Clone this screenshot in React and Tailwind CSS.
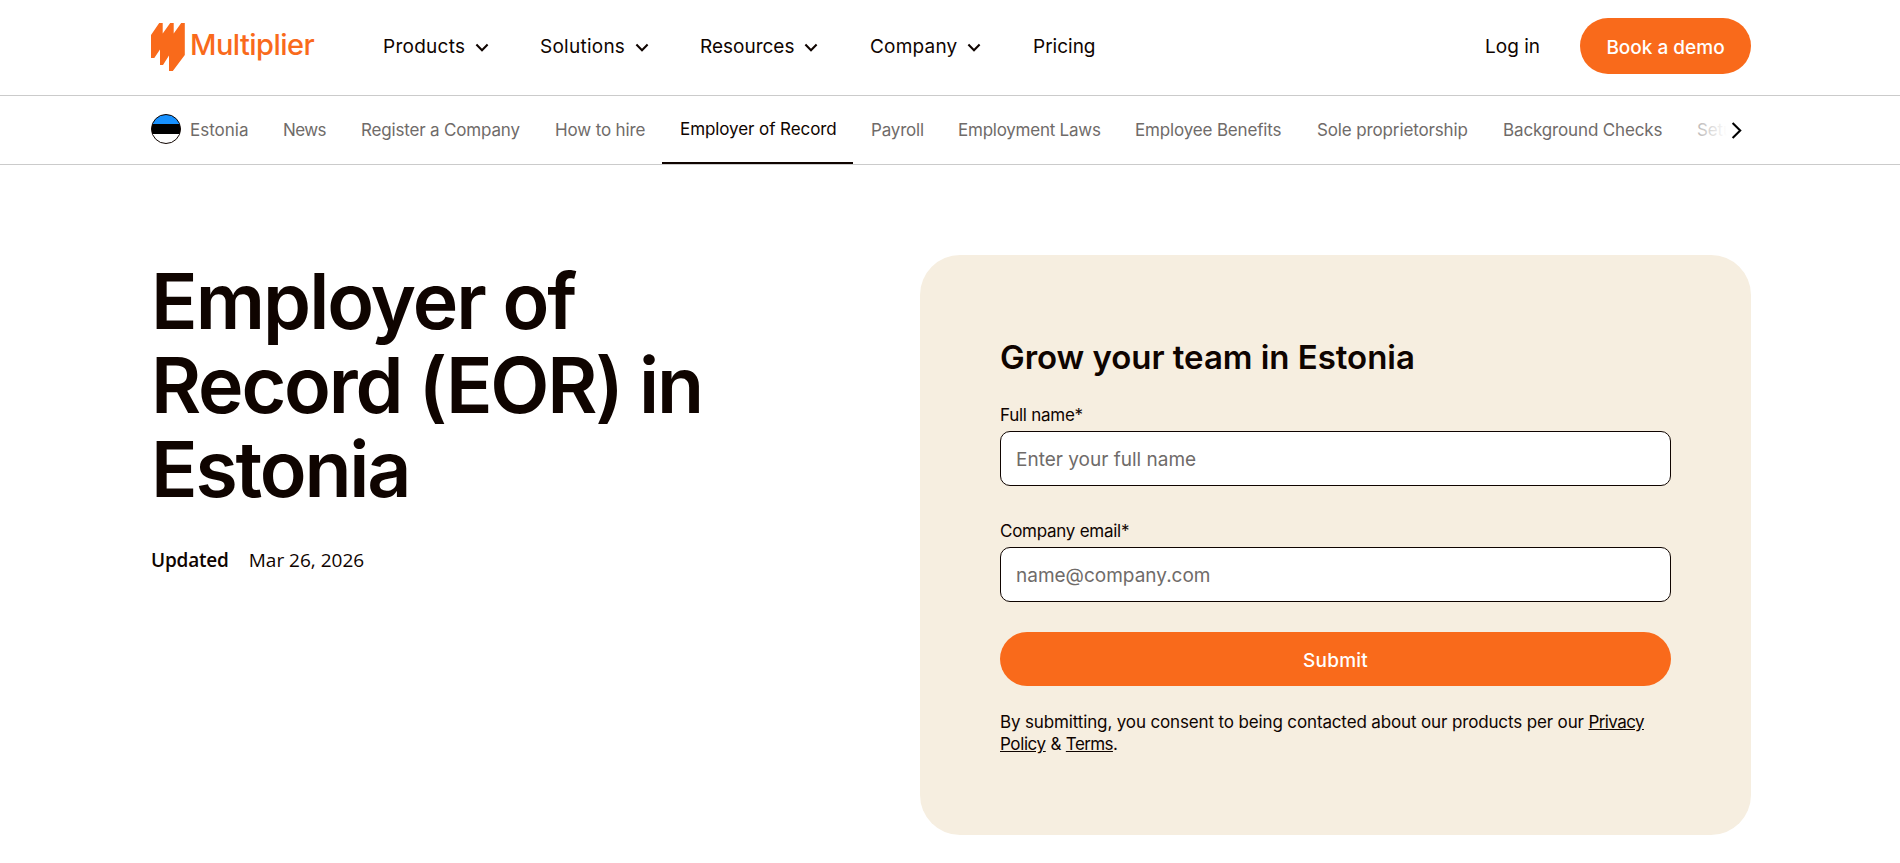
import React from 'react';
import clsx from 'clsx';

const mainNav = [
  { label: 'Products', menu: true, className: 'w-[157px] tracking-[0.27px]' },
  { label: 'Solutions', menu: true, className: 'w-[160px] tracking-[0.25px]' },
  { label: 'Resources', menu: true, className: 'w-[170px]' },
  { label: 'Company', menu: true, className: 'w-[163px] tracking-[0.2px]' },
  { label: 'Pricing', menu: false, className: '' },
];

const countryNav = [
  { label: 'News', className: 'w-[78px] tracking-[-0.6px]' },
  { label: 'Register a Company', className: 'w-[194px] tracking-[-0.17px]' },
  { label: 'How to hire', className: 'w-[124px] tracking-[-0.14px]' },
  { label: 'Employer of Record', active: true, className: 'w-[191px] pl-[18px] tracking-[-0.08px]' },
  { label: 'Payroll', className: 'w-[88px] pl-[18px] tracking-[-0.19px]' },
  { label: 'Employment Laws', className: 'w-[177px] tracking-[-0.24px]' },
  { label: 'Employee Benefits', className: 'w-[182px] tracking-[-0.16px]' },
  { label: 'Sole proprietorship', className: 'w-[186px] tracking-[-0.13px]' },
  { label: 'Background Checks', className: 'w-[194px] tracking-[-0.14px]' },
  { label: 'Setup', className: 'w-[78px] tracking-[-0.14px]' },
];

function Logo() {
  return (
    <a href="#" className="flex h-12 w-[232px] items-center pt-[2px] text-[#f96a1b]">
      <svg className="h-12 w-[34px] shrink-0" viewBox="0 0 34 48" fill="currentColor">
        <path d="M0 12L8.2 0H11.7V10.5L19.2 0H22.7V10.5L30.2 0H33.8V32L21.8 48H18V32.5L12 42H9V26.5L3.3 35H0Z" />
      </svg>
      <span className="-mt-[4px] ml-[5px] text-[29px] leading-8 font-medium tracking-[-0.55px]">Multiplier</span>
    </a>
  );
}

function ChevronDown() {
  return (
    <svg className="mt-px ml-[10px] h-[9px] w-[14px] shrink-0" viewBox="0 0 14 9" fill="none" stroke="currentColor" strokeWidth="2.1">
      <path d="M1.4 1.6L7 7.2L12.6 1.6" />
    </svg>
  );
}

function EstoniaFlag() {
  return (
    <svg className="-mt-0.5 h-[30px] w-[30px] shrink-0" viewBox="0 0 30 30">
      <clipPath id="flag">
        <circle cx="15" cy="15" r="14.5" />
      </clipPath>
      <g clipPath="url(#flag)">
        <rect width="30" height="10" fill="#1791ff" />
        <rect y="10" width="30" height="10" fill="#000" />
        <rect y="20" width="30" height="10" fill="#fff" />
      </g>
      <circle cx="15" cy="15" r="14.5" fill="none" stroke="#0f0400" />
    </svg>
  );
}

function Field({ label, type, placeholder }) {
  return (
    <label className="block">
      <span className="block text-[17px] leading-5 tracking-[-0.26px]">{label}</span>
      <input
        type={type}
        placeholder={placeholder}
        className="mt-1.5 block h-[55px] w-full rounded-[10px] border border-[#0f0400] bg-white pt-[2px] pr-[14px] pl-[15px] text-[19px] placeholder:text-[#6f6b69]"
      />
    </label>
  );
}

export default function App() {
  return (
    <div className="h-[863px] overflow-hidden bg-white font-['Inter','Liberation_Sans',sans-serif] text-[#0f0400]">
      <header className="h-24 border-b border-[#cbcbcb]">
        <div className="ml-[151px] flex h-[92px] w-[1600px] items-center text-[19px]">
          <Logo />
          <nav className="flex items-center pt-[2px]">
            {mainNav.map((item) => (
              <a key={item.label} href="#" className={clsx('flex items-center', item.className)}>
                {item.label}
                {item.menu && <ChevronDown />}
              </a>
            ))}
          </nav>
          <a href="#" className="ml-auto pt-[2px]">Log in</a>
          <a
            href="#"
            className="ml-[40px] flex h-14 w-[171px] items-center justify-center rounded-full bg-[#f96a1b] pt-[4px] font-medium text-white"
          >
            Book a demo
          </a>
        </div>
      </header>

      <div className="h-[69px] border-b border-[#cbcbcb]">
        <div className="relative ml-[151px] flex h-[68px] w-[1600px] text-[17px] text-[#6f6b69]">
          <a href="#" className="flex w-[115px] shrink-0 items-center">
            <EstoniaFlag />
            <span className="ml-[9px] pt-px">Estonia</span>
          </a>
          <nav className="flex flex-1 overflow-hidden">
            {countryNav.map((item) => (
              <a
                key={item.label}
                href="#"
                className={clsx(
                  'flex shrink-0 items-center pt-[2px] whitespace-nowrap',
                  item.active && 'border-b-2 border-[#0f0400] text-[#0f0400]',
                  !item.className.includes('pl-') && 'pl-[17px]',
                  item.className
                )}
              >
                {item.label}
              </a>
            ))}
          </nav>
          {/* fades the last link out behind the scroll button */}
          <div className="absolute top-0 right-0 flex h-full w-[88px]">
            <div className="w-[64px] bg-linear-to-r from-white/0 to-white" />
            <button type="button" className="flex flex-1 items-center bg-white text-black">
              <svg className="ml-[4px] h-[17px] w-[12px]" viewBox="0 0 12 17" fill="none" stroke="currentColor" strokeWidth="2.1">
                <path d="M1.6 1L9.2 8.5L1.6 16" />
              </svg>
            </button>
          </div>
        </div>
      </div>

      <main className="ml-[151px] flex w-[1600px] justify-between pt-[90px]">
        <section className="pt-[4px]">
          <h1 className="text-[77px] leading-[84px] font-semibold tracking-[-2.2px]">
            <span className="tracking-[-1.95px]">Employer of</span>
            <br />
            Record (EOR) in
            <br />
            Estonia
          </h1>
          <p className="mt-[35px] flex gap-[20px] font-['Open_Sans',sans-serif] text-[19px] leading-7">
            <span className="font-semibold tracking-[-0.19px]">Updated</span>
            <span>Mar 26, 2026</span>
          </p>
        </section>

        <section className="h-[580px] w-[831px] rounded-[40px] bg-[#f6eee0] px-20 pt-[82px]">
          <h2 className="text-[33px] leading-10 font-semibold tracking-[-0.04px]">Grow your team in Estonia</h2>
          <form className="mt-7">
            <Field label="Full name*" type="text" placeholder="Enter your full name" />
            <div className="mt-[35px]">
              <Field label="Company email*" type="email" placeholder="name@company.com" />
            </div>
            <button
              type="button"
              className="mt-[30px] flex h-[54px] w-full items-center justify-center rounded-full bg-[#f96a1b] pt-[4px] text-[19px] font-medium tracking-[0.2px] text-white"
            >
              Submit
            </button>
          </form>
          <p className="mt-[25px] text-[17px] leading-[22px] tracking-[-0.14px]">
            By submitting, you consent to being contacted about our products per our{' '}
            <a href="#" className="tracking-[-0.6px] underline">
              Privacy
              <br />
              <span className="tracking-[-0.4px]">Policy</span>
            </a>{' '}
            &amp; <a href="#" className="tracking-[-0.6px] underline">Terms</a>.
          </p>
        </section>
      </main>
    </div>
  );
}
